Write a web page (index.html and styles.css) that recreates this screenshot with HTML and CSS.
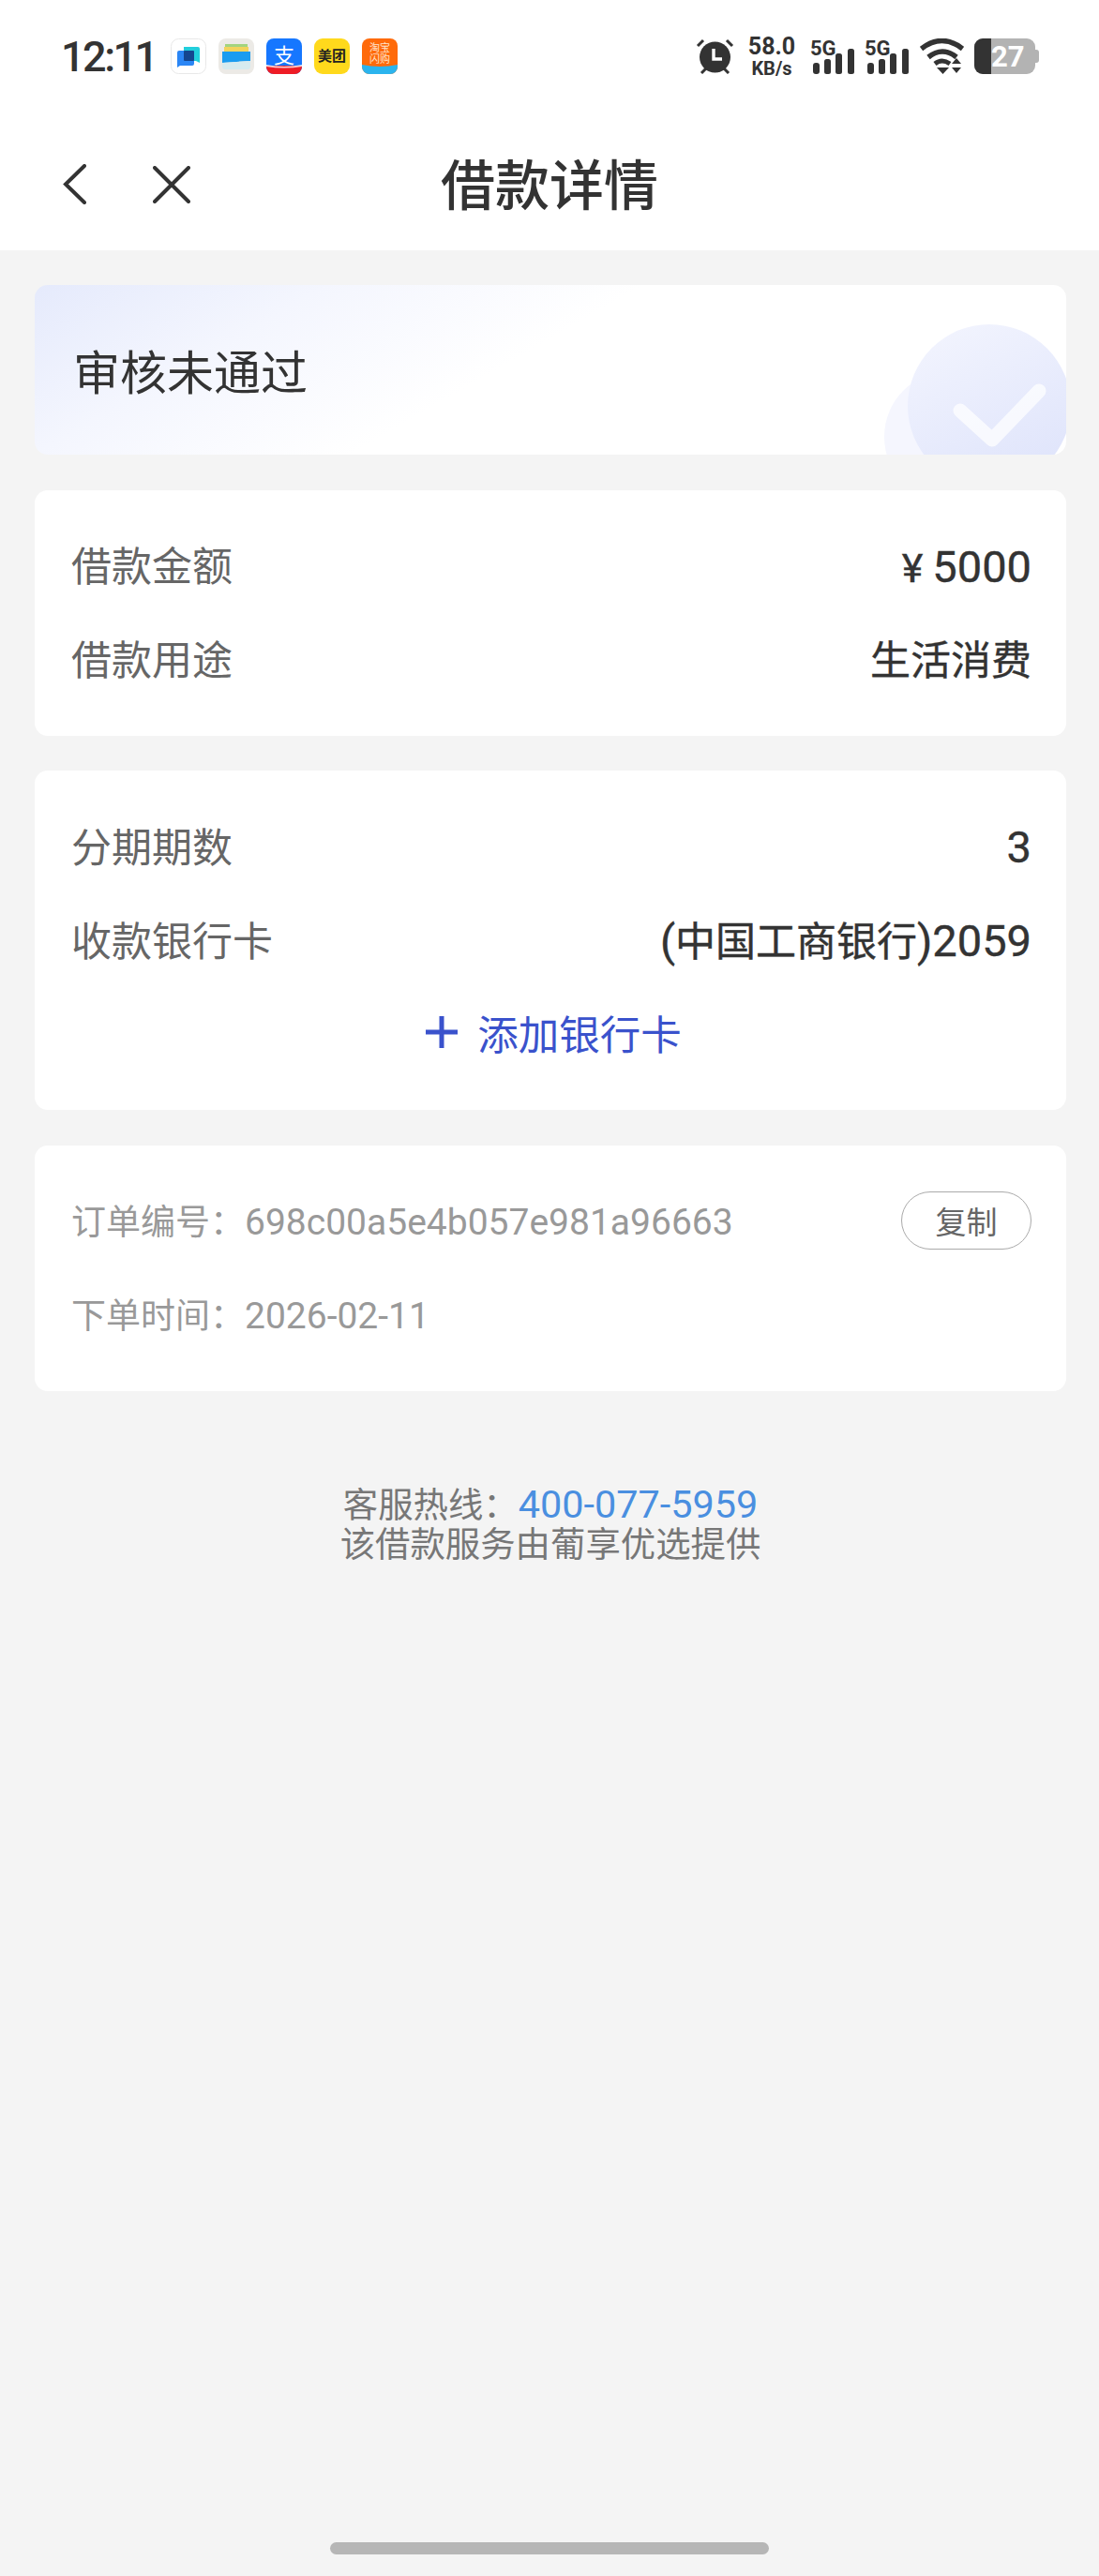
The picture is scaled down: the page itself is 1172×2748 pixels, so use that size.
FILE: index.html
```html
<!DOCTYPE html>
<html lang="zh-CN">
<head>
    <meta charset="UTF-8">
    <meta name="viewport" content="width=device-width, initial-scale=1.0">
    <title>借款详情</title>
    <link rel="stylesheet" href="styles.css">
</head>

<body>
    <div class="status-bar">
        <div class="status-left">
            <span class="clock">12:11</span>
            <div class="app-icons">
                <svg class="app-icon" viewBox="0 0 38 38">
                    <rect x="0.5" y="0.5" width="37" height="37" rx="8" fill="#fff" stroke="#e8e8e8"/>
                    <path d="M14 9h15a2 2 0 0 1 2 2v15l-4-2H14z" fill="#22cfdc"/>
                    <path d="M7 15a2 2 0 0 1 2-2h14a2 2 0 0 1 2 2v12a2 2 0 0 1-2 2H10l-3 2z" fill="#2b86f5"/>
                    <rect x="14" y="13" width="11" height="11" rx="1" fill="#14468f"/>
                </svg>
                <svg class="app-icon" viewBox="0 0 38 38">
                    <rect width="38" height="38" rx="8" fill="#eceae6"/>
                    <rect x="7" y="6" width="24" height="6" fill="#a3d47e"/>
                    <rect x="6" y="9" width="26" height="6" fill="#f2d35c"/>
                    <path d="M4 14h30v10L4 26z" fill="#1a9cf0"/>
                    <path d="M4 26l30-2v6a3 3 0 0 1-3 3H7a3 3 0 0 1-3-3z" fill="#d6ebef"/>
                </svg>
                <svg class="app-icon" viewBox="0 0 38 38">
                    <rect width="38" height="38" rx="8" fill="#1677ff"/>
                    <path d="M0 29h38v1a8 8 0 0 1-8 8H8a8 8 0 0 1-8-8z" fill="#ee1c25"/>
                    <path d="M0 28q19 4 38 0v2q-19 3-38 0z" fill="#fff" opacity="0.8"/>
                    <text class="icon-text" x="19" y="26" font-size="22" fill="#fff" text-anchor="middle">支</text>
                </svg>
                <svg class="app-icon" viewBox="0 0 38 38">
                    <rect width="38" height="38" rx="9" fill="#ffd91c"/>
                    <text class="icon-text" x="19" y="24" font-size="15" font-weight="700" fill="#222" text-anchor="middle">美团</text>
                </svg>
                <svg class="app-icon" viewBox="0 0 38 38">
                    <rect width="38" height="38" rx="8" fill="#ff6a0a"/>
                    <path d="M0 28q19 4 38 0v2a8 8 0 0 1-8 8H8a8 8 0 0 1-8-8z" fill="#2bb4ee"/>
                    <text class="icon-text" x="19" y="14" font-size="11" fill="#ffe3cc" text-anchor="middle">淘宝</text>
                    <text class="icon-text" x="19" y="26" font-size="11" fill="#ffe3cc" text-anchor="middle">闪购</text>
                </svg>
            </div>
        </div>
        <div class="status-right">
            <svg class="alarm" viewBox="0 0 41 38">
                <circle cx="20.5" cy="20" r="16.500" fill="#333"/>
                <path d="M2 8l6-6M39 8l-6-6M6 37l5-5M35 37l-5-5" stroke="#333" stroke-width="3" fill="none"/>
                <path d="M19 11v11h9" stroke="#fff" stroke-width="3.4" fill="none"/>
            </svg>
            <div class="net-speed">
                <span class="speed-num">58.0</span>
                <span class="speed-unit">KB/s</span>
            </div>
            <div class="signal-group">
                <div class="signal">
                    <span class="signal-label">5G</span>
                    <svg class="bars" viewBox="0 0 44 27">
                        <rect x="0" y="15" width="7" height="12" rx="3" fill="#333"/>
                        <rect x="12" y="11" width="7" height="16" rx="2.5" fill="#333"/>
                        <rect x="24" y="5" width="7" height="22" rx="2.5" fill="#333"/>
                        <rect x="37" y="0" width="7" height="27" rx="2.5" fill="#333"/>
                    </svg>
                </div>
                <div class="signal">
                    <span class="signal-label">5G</span>
                    <svg class="bars" viewBox="0 0 44 27">
                        <rect x="0" y="15" width="7" height="12" rx="3" fill="#333"/>
                        <rect x="12" y="11" width="7" height="16" rx="2.5" fill="#333"/>
                        <rect x="24" y="5" width="7" height="22" rx="2.5" fill="#333"/>
                        <rect x="37" y="0" width="7" height="27" rx="2.5" fill="#333"/>
                    </svg>
                </div>
            </div>
            <svg class="wifi" viewBox="0 0 47 38">
                <path d="M1.500 11Q23.500 -6 45.500 11" stroke="#333" stroke-width="5.500" fill="none"/>
                <path d="M9 20Q24 8 39 20" stroke="#333" stroke-width="5.500" fill="none"/>
                <path d="M16 27Q23.500 21 32 27" stroke="#333" stroke-width="5" fill="none"/>
                <path d="M18 31h13l-6.500 7zM34 27l5-6 5 6zM34 31h10l-5 6z" fill="#333"/>
            </svg>
            <div class="battery">
                <div class="battery-level"></div>
                <span class="battery-num">27</span>
                <div class="battery-nub"></div>
            </div>
        </div>
    </div>

    <div class="nav-bar">
        <div class="nav-icons">
            <svg class="nav-back" viewBox="0 0 25 43">
                <path d="M23 2L3 21.500 23 41" stroke="#333" stroke-width="4" stroke-linecap="round" fill="none"/>
            </svg>
            <svg class="nav-close" viewBox="0 0 40 40">
                <path d="M2 2l36 36M38 2L2 38" stroke="#333" stroke-width="4" stroke-linecap="round" fill="none"/>
            </svg>
        </div>
        <h1 class="nav-title">借款详情</h1>
    </div>

    <div class="container">
        <div class="card status-card">
            <span class="status-text">审核未通过</span>
            <svg class="status-art" viewBox="0 0 194 140">
                <defs>
                    <linearGradient id="artFill" x1="0.2" y1="0" x2="0.7" y2="1">
                        <stop offset="0" stop-color="#f2f4fe"/>
                        <stop offset="1" stop-color="#dfe4fb"/>
                    </linearGradient>
                </defs>
                <circle cx="70" cy="121" r="70" fill="#f5f6fe"/>
                <circle cx="112" cy="88" r="87" fill="url(#artFill)"/>
                <path d="M81 93l34 31 50-52" stroke="#fff" stroke-opacity="0.72" stroke-width="15" stroke-linecap="round" stroke-linejoin="round" fill="none"/>
            </svg>
        </div>

        <div class="card">
            <div class="row">
                <span class="row-label">借款金额</span>
                <span class="row-value"><span class="yen">¥</span><span class="num">5000</span></span>
            </div>
            <div class="row">
                <span class="row-label">借款用途</span>
                <span class="row-value">生活消费</span>
            </div>
        </div>

        <div class="card">
            <div class="row">
                <span class="row-label">分期期数</span>
                <span class="row-value"><span class="num">3</span></span>
            </div>
            <div class="row">
                <span class="row-label">收款银行卡</span>
                <span class="row-value"><span class="num">(</span>中国工商银行<span class="num">)2059</span></span>
            </div>
            <div class="row add-card">
                <svg class="add-plus" viewBox="0 0 34 34">
                    <path d="M17 0v34M0 17h34" stroke="#3a52cc" stroke-width="5" fill="none"/>
                </svg>
                <span>添加银行卡</span>
            </div>
        </div>

        <div class="card">
            <div class="row order-row">
                <span>订单编号：<span class="order-num">698c00a5e4b057e981a96663</span></span>
                <button class="copy-btn">复制</button>
            </div>
            <div class="row order-row">
                <span>下单时间：<span class="order-num">2026-02-11</span></span>
            </div>
        </div>

        <div class="footer-note">
            <div>客服热线：<span class="hotline">400-077-5959</span></div>
            <div>该借款服务由葡享优选提供</div>
        </div>
    </div>

    <div class="home-bar"></div>
</body>
</html>
```

FILE: styles.css
```css
*{
    box-sizing: border-box;
    font-family: Roboto, "Noto Sans CJK SC", sans-serif;
}
body{
    margin: 0;
    height: 2748px;
    display: flex;
    flex-direction: column;
    background-color: #f4f4f4;
    color: #333;
}
.status-bar{
    height: 120px;
    padding: 0 68px 0 65px;
    display: flex;
    justify-content: space-between;
    align-items: center;
    background-color: #fff;
}
.status-left,
.status-right{
    display: flex;
    align-items: center;
}
.clock{
    width: 117px;
    font-size: 45px;
    font-weight: 500;
    line-height: 1;
    letter-spacing: -2.5px;
}
.app-icons{
    display: flex;
    gap: 13px;
}
.app-icon{
    width: 38px;
    height: 38px;
    display: block;
}
.icon-text{
    font-family: "Noto Sans CJK SC", sans-serif;
}
.alarm{
    width: 41px;
    height: 38px;
    margin-right: 15px;
}
.net-speed{
    width: 50px;
    margin-right: 16px;
    display: flex;
    flex-direction: column;
    align-items: center;
    font-weight: 700;
    line-height: 1;
}
.speed-num{
    font-size: 25px;
    height: 26px;
}
.speed-unit{
    font-size: 20px;
}
.signal-group{
    display: flex;
    gap: 11px;
    margin-right: 12px;
}
.signal{
    position: relative;
    width: 47px;
    height: 38px;
    display: flex;
    justify-content: flex-end;
    align-items: flex-end;
}
.signal-label{
    position: absolute;
    top: 0;
    left: 0;
    font-size: 22px;
    font-weight: 700;
    line-height: 1;
}
.bars{
    width: 44px;
    height: 27px;
    display: block;
}
.wifi{
    width: 47px;
    height: 38px;
    margin-right: 11px;
}
.battery{
    position: relative;
    width: 65px;
    height: 38px;
    border-radius: 9px;
    background-color: #b3b3b3;
    display: flex;
    align-items: center;
}
.battery-level{
    width: 18px;
    height: 38px;
    border-radius: 9px 0 0 9px;
    background-color: #333;
}
.battery-num{
    font-size: 31px;
    font-weight: 700;
    line-height: 1;
    color: #fff;
}
.battery-nub{
    position: absolute;
    top: 12px;
    right: -4px;
    width: 4px;
    height: 14px;
    border-radius: 0 3px 3px 0;
    background-color: #b3b3b3;
}
.nav-bar{
    position: relative;
    height: 147px;
    padding-top: 12px;
    display: flex;
    justify-content: center;
    align-items: center;
    background-color: #fff;
}
.nav-icons{
    position: absolute;
    top: 55px;
    left: 67px;
    display: flex;
    align-items: center;
    gap: 71px;
}
.nav-back{
    width: 25px;
    height: 43px;
}
.nav-close{
    width: 40px;
    height: 40px;
}
.nav-title{
    margin: 0;
    font-size: 58px;
    font-weight: 500;
    line-height: 1.2;
}
.container{
    padding: 37px 35px 0 37px;
    display: flex;
    flex-direction: column;
    gap: 37.5px;
}
.card{
    padding: 31px 37px 31px 39px;
    border-radius: 14px;
    background-color: #fff;
}
.status-card{
    position: relative;
    height: 181px;
    padding: 8px 0 0 41px;
    display: flex;
    align-items: center;
    overflow: hidden;
    background: linear-gradient(150deg, #e5eafc 0%, #f4f6fe 22%, #fff 46%);
}
.status-text{
    font-size: 50px;
    line-height: 1.2;
}
.status-art{
    position: absolute;
    right: 0;
    bottom: 0;
    width: 194px;
    height: 140px;
}
.row{
    height: 100px;
    padding-top: 3px;
    display: flex;
    justify-content: space-between;
    align-items: center;
}
.row-label{
    font-size: 43px;
    line-height: 60px;
    color: #666;
}
.row-value{
    font-size: 43px;
    line-height: 60px;
    color: #333;
    -webkit-text-stroke: 0.4px #333;
}
.num{
    font-size: 47px;
}
.yen{
    margin-right: 10px;
    font-size: 43px;
}
.add-card{
    padding: 0 0 4px 5px;
    justify-content: center;
    gap: 21px;
    font-size: 43.5px;
    color: #3a52cc;
}
.add-plus{
    width: 34px;
    height: 34px;
}
.order-row{
    font-size: 37px;
    line-height: 60px;
    color: #999;
}
.order-num{
    font-size: 39px;
}
.copy-btn{
    width: 139px;
    height: 62px;
    margin-top: -5px;
    padding: 0;
    border: 1px solid #aaa;
    border-radius: 31px;
    background-color: #fff;
    font-size: 33px;
    color: #666;
}
.footer-note{
    margin-top: 63px;
    text-align: center;
    font-size: 37.4px;
    line-height: 42px;
    color: #777;
}
.hotline{
    font-size: 41.4px;
    color: #4a8fe0;
}
.home-bar{
    width: 468px;
    height: 13px;
    margin: auto auto 23px;
    border-radius: 7px;
    background-color: #b6b6b6;
}
```
